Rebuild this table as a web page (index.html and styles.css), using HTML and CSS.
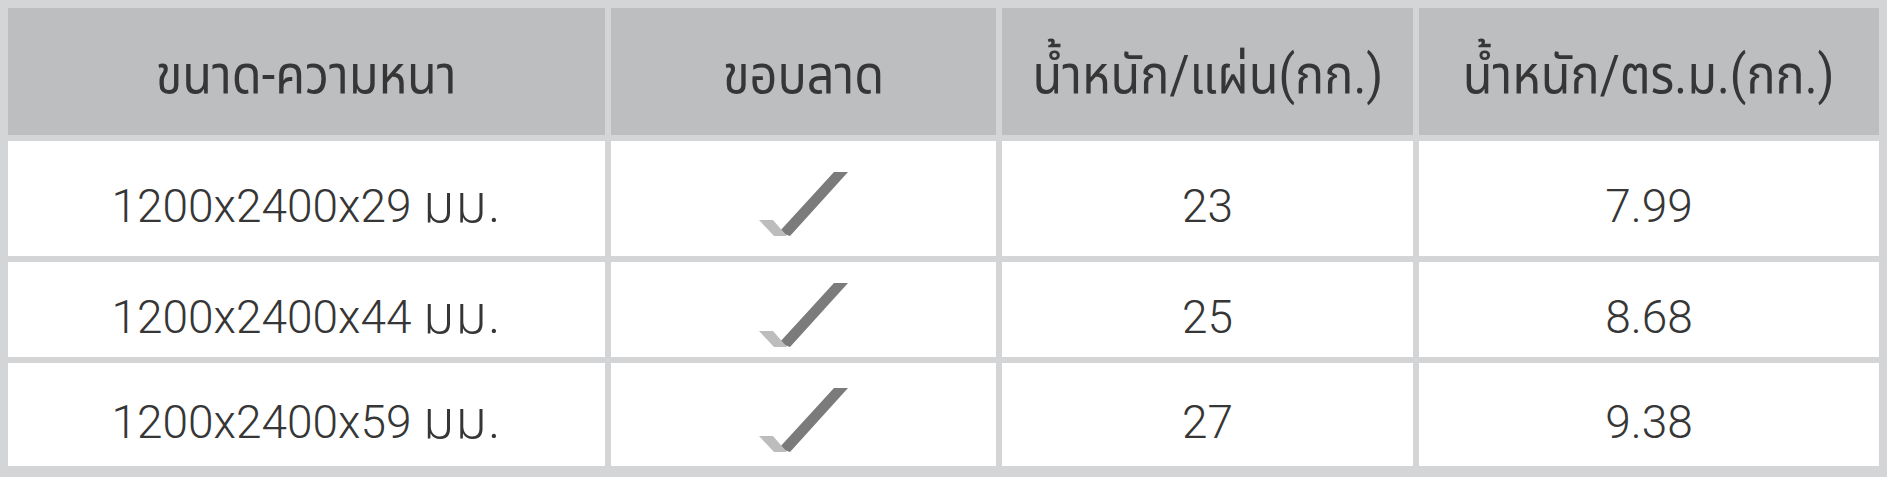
FILE: index.html
```html
<!DOCTYPE html>
<html lang="th">
<head>
<meta charset="utf-8">
<link rel="stylesheet" href="styles.css">
</head>
<body>
<div class="spec">
  <div class="cell head"><span class="label">ขนาด-ความหนา</span></div>
  <div class="cell head"><span class="label">ขอบลาด</span></div>
  <div class="cell head"><span class="label">น้ำหนัก/แผ่น(กก.)</span></div>
  <div class="cell head"><span class="label">น้ำหนัก/ตร.ม.(กก.)</span></div>

  <div class="cell">1200x2400x29 <span class="th">มม.</span></div>
  <div class="cell"><svg class="check" viewBox="0 0 89 64" width="89" height="64"><polygon points="75,0 89,0 31,64 20,60" fill="#7b7b7b"/><polygon points="0,48 14,48 28,64 15,64" fill="#bdbdbd"/></svg></div>
  <div class="cell">23</div>
  <div class="cell">7.99</div>

  <div class="cell">1200x2400x44 <span class="th">มม.</span></div>
  <div class="cell"><svg class="check" viewBox="0 0 89 64" width="89" height="64"><polygon points="75,0 89,0 31,64 20,60" fill="#7b7b7b"/><polygon points="0,48 14,48 28,64 15,64" fill="#bdbdbd"/></svg></div>
  <div class="cell">25</div>
  <div class="cell">8.68</div>

  <div class="cell">1200x2400x59 <span class="th">มม.</span></div>
  <div class="cell"><svg class="check" viewBox="0 0 89 64" width="89" height="64"><polygon points="75,0 89,0 31,64 20,60" fill="#7b7b7b"/><polygon points="0,48 14,48 28,64 15,64" fill="#bdbdbd"/></svg></div>
  <div class="cell">27</div>
  <div class="cell">9.38</div>
</div>
</body>
</html>
```

FILE: styles.css
```css
html, body {
  margin: 0;
  padding: 0;
  background: #d4d5d7;
}
.spec {
  display: grid;
  grid-template-columns: 597px 385px 411px 460px;
  grid-template-rows: 127px 115px 95px 103px;
  gap: 6px;
  padding: 8px 8px 11px 8px;
  background: #d4d5d7;
  width: 1887px;
  height: 477px;
  box-sizing: border-box;
  font-family: Roboto, "Noto Sans Thai", "Liberation Sans", sans-serif;
}
.cell {
  background: #ffffff;
  display: flex;
  align-items: center;
  justify-content: center;
  color: #363636;
  font-size: 46px;
  font-weight: 300;
  padding-top: 15px;
  box-sizing: border-box;
  white-space: pre;
}
.th {
  font-size: 52px;
  letter-spacing: 1px;
}
.cell.head {
  background: #bdbec0;
  color: #363637;
  font-weight: 400;
  padding-top: 10px;
}
.label {
  display: inline-block;
  font-size: 54px;
  transform: scaleX(0.9);
  white-space: nowrap;
}
.check {
  display: block;
  margin-top: -4px;
}
```
